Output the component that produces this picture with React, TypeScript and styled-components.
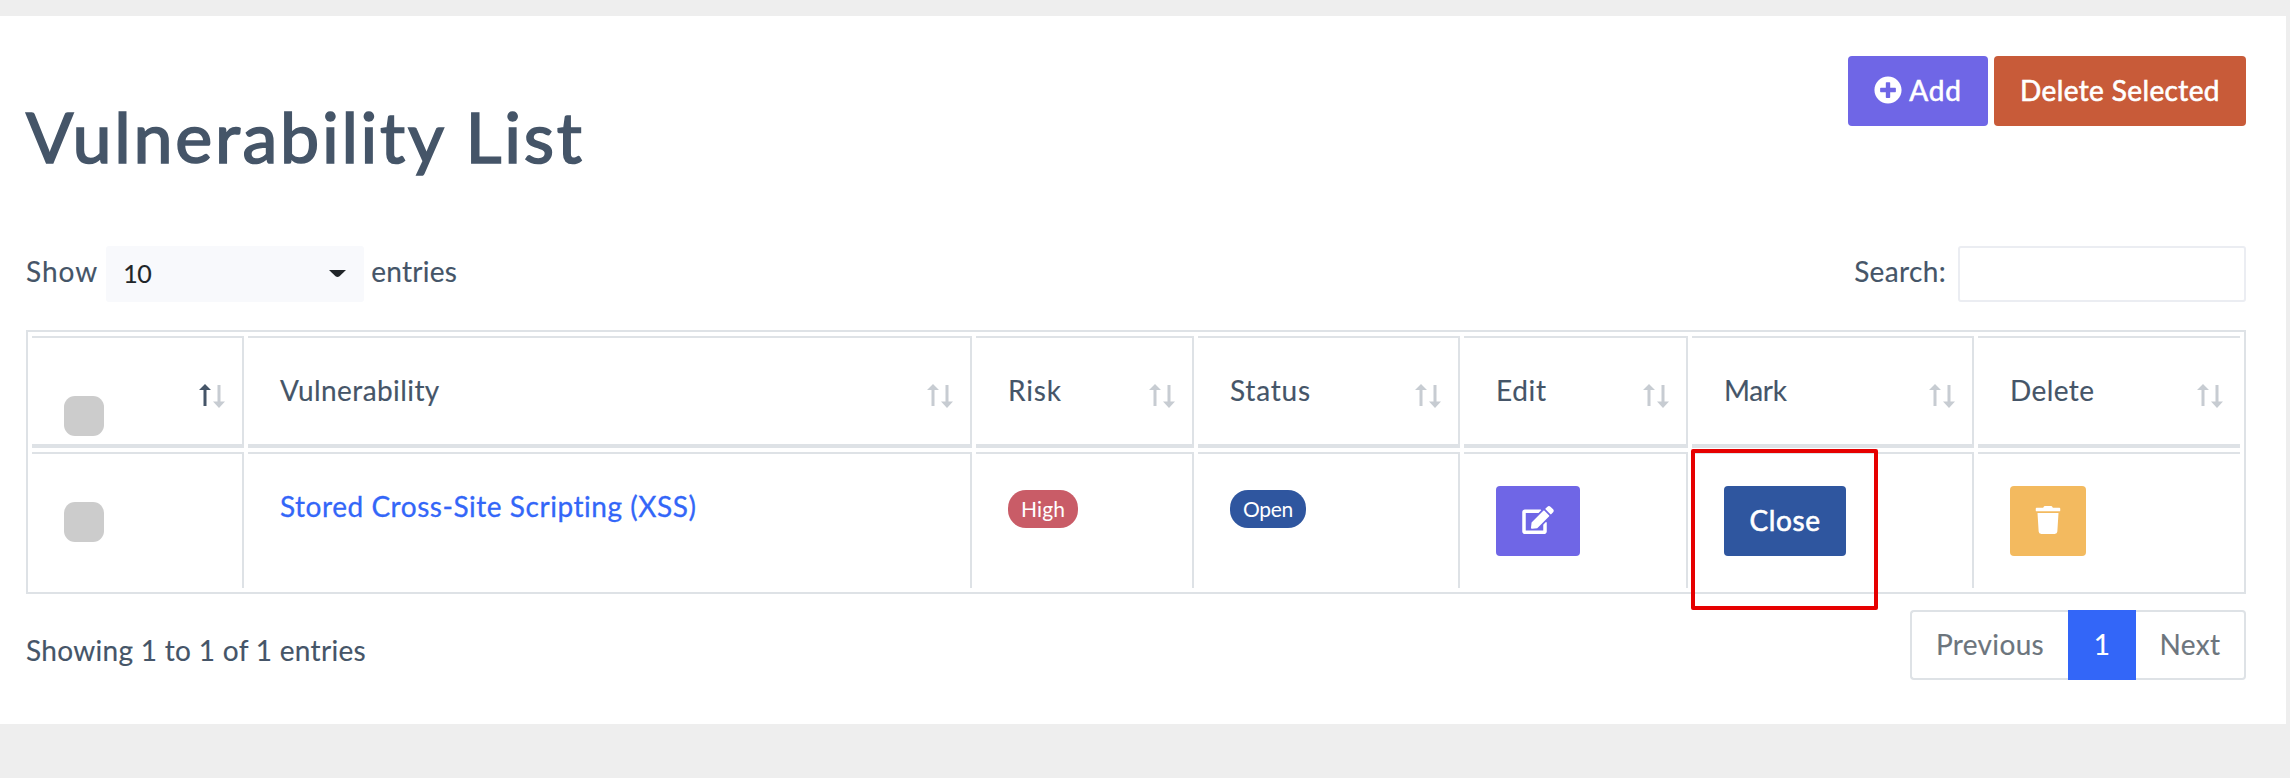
import React from 'react';
import styled, { createGlobalStyle } from 'styled-components';
import { FaEdit, FaPlusCircle, FaTrash } from 'react-icons/fa';

const GlobalStyle = createGlobalStyle`
  *, *::before, *::after { box-sizing: border-box; }
  body {
    margin: 0;
    background: #eeeeee;
    color: #455568;
    font-family: Lato, "Noto Sans", sans-serif;
    font-size: 28px;
    line-height: 40px;
  }
  button { font: inherit; }
`;

const Page = styled.div`
  padding: 16px 4px 54px 0;
  min-height: 778px;
`;

const Card = styled.main`
  height: 708px;
  padding: 40px 40px 0 26px;
  background: #fff;
`;

const Header = styled.header`
  display: flex;
  justify-content: space-between;
  align-items: flex-start;
  height: 190px;
`;

const Title = styled.h1`
  margin: 37px 0 0;
  font-size: 70px;
  line-height: 86px;
  font-weight: 400;
  letter-spacing: 2.7px;
  -webkit-text-stroke: 1.7px currentColor;
`;

const Actions = styled.div`
  display: flex;
  gap: 6px;
`;

const Text = styled.span<{ $ls?: number; $stroke?: number; $dx?: number }>`
  letter-spacing: ${p => p.$ls ?? 0.3}px;
  margin-left: ${p => p.$dx ?? 0}px;
  -webkit-text-stroke: ${p => p.$stroke ?? 0.15}px currentColor;
  white-space: nowrap;
`;

const Button = styled.button<{ $bg: string; $width: number }>`
  display: flex;
  align-items: center;
  justify-content: center;
  width: ${p => p.$width}px;
  height: 70px;
  padding: 0 0 2px;
  border: 0;
  border-radius: 4px;
  background: ${p => p.$bg};
  color: #fff;
  line-height: 36px;
`;

const EditIcon = styled(FaEdit)`
  width: 32px;
  height: 28px;
`;

const Controls = styled.div`
  display: flex;
  justify-content: space-between;
  height: 56px;
  margin-bottom: 28px;
`;

const Label = styled.label`
  display: flex;
  line-height: 51px;
`;

const Select = styled.span`
  display: flex;
  justify-content: space-between;
  align-items: center;
  width: 258px;
  height: 56px;
  margin: 0 7px 0 8px;
  padding: 0 18px 2px 17px;
  border-radius: 3px;
  background: #f8f9fc;
  color: #212529;
  font-size: 25px;
`;

const Caret = styled.svg`
  fill: #212529;
`;

const SearchInput = styled.input`
  width: 288px;
  height: 56px;
  margin-left: 12px;
  padding: 0 14px;
  border: 2px solid #ebedf2;
  border-radius: 3px;
  font: inherit;
  color: inherit;
`;

const Table = styled.table`
  width: 2220px;
  table-layout: fixed;
  border: 2px solid #dee2e6;
  border-collapse: separate;
  border-spacing: 4px;
`;

const Col = styled.col<{ $width: number }>`
  width: ${p => p.$width}px;
`;

const HeadCell = styled.th`
  height: 112px;
  padding: 36px 17px 8px 32px;
  border: solid #dee2e6;
  border-width: 2px 2px 4px 0;
  font-weight: 400;
  line-height: 32px;
  text-align: left;
  vertical-align: top;
  &:last-child { border-right: 0; }
`;

const HeadInner = styled.div`
  display: flex;
  justify-content: space-between;
  align-items: flex-start;
`;

const SortIcon = styled.svg`
  flex: none;
  margin-top: 10px;
`;

const Cell = styled.td`
  position: relative;
  height: 136px;
  padding: 32px 17px 32px 32px;
  border: solid #dee2e6;
  border-width: 2px 2px 0 0;
  vertical-align: top;
  &:last-child { border-right: 0; }
`;

const Checkbox = styled.span<{ $top: number }>`
  display: block;
  width: 40px;
  height: 40px;
  margin-top: ${p => p.$top}px;
  border-radius: 11px;
  background: #ccc;
`;

const VulnLink = styled.a`
  color: #3366f8;
  text-decoration: none;
`;

const Badge = styled.span<{ $bg: string; $width: number }>`
  display: flex;
  justify-content: center;
  width: ${p => p.$width}px;
  height: 38px;
  margin-top: 4px;
  border-radius: 18px;
  background: ${p => p.$bg};
  color: #fff;
  font-size: 21px;
  line-height: 37px;
`;

const Highlight = styled.span`
  position: absolute;
  left: -1px;
  top: -5px;
  width: 187px;
  height: 161px;
  border: 4px solid #e60000;
  border-radius: 2px;
  pointer-events: none;
`;

const Footer = styled.footer`
  display: flex;
  justify-content: space-between;
  align-items: flex-start;
`;

const Info = styled.div`
  padding-top: 36px;
`;

const Pagination = styled.nav`
  display: flex;
  width: 336px;
  height: 70px;
  margin-top: 16px;
`;

const PageItem = styled.a<{ $width: number; $active?: boolean; $side?: 'left' | 'right' }>`
  display: flex;
  align-items: center;
  justify-content: center;
  width: ${p => p.$width}px;
  padding-bottom: 3px;
  border: 2px solid ${p => (p.$active ? '#3366f8' : '#dee2e6')};
  ${p => p.$side === 'left' && 'border-right: 0; border-radius: 4px 0 0 4px;'}
  ${p => p.$side === 'right' && 'border-left: 0; border-radius: 0 4px 4px 0;'}
  background: ${p => (p.$active ? '#3366f8' : '#fff')};
  color: ${p => (p.$active ? '#fff' : '#6c757d')};
`;

const columns: { label: string; width: number; ls: number }[] = [
  { label: '', width: 212, ls: 0 },
  { label: 'Vulnerability', width: 724, ls: 0.42 },
  { label: 'Risk', width: 218, ls: 0.87 },
  { label: 'Status', width: 262, ls: 0.8 },
  { label: 'Edit', width: 224, ls: 0.67 },
  { label: 'Mark', width: 282, ls: -0.33 },
  { label: 'Delete', width: 262, ls: 0.4 },
];

function SortArrows({ active }: { active?: boolean }) {
  return (
    <SortIcon width="26" height="24" viewBox="0 0 26 24">
      <path d="M6 0 12 6H7.5V22H4.5V6H0Z" fill={active ? '#455568' : '#c7ccd2'} />
      <path d="M18.5 1H21.5V17.5H26L20 24 14 17.5H18.5Z" fill="#c7ccd2" />
    </SortIcon>
  );
}

export default function App() {
  return (
    <Page>
      <GlobalStyle />
      <Card>
        <Header>
          <Title>Vulnerability List</Title>
          <Actions>
            <Button $bg="#6f66e6" $width={140}>
              <FaPlusCircle size={28} />
              <Text $ls={0.8} $stroke={0.6} $dx={7}>Add</Text>
            </Button>
            <Button $bg="#c85b39" $width={252}>
              <Text $ls={0.38} $stroke={0.6}>Delete Selected</Text>
            </Button>
          </Actions>
        </Header>

        <Controls>
          <Label>
            <Text $ls={1}>Show</Text>
            <Select>
              <Text $ls={-0.4}>10</Text>
              <Caret width="17" height="7" viewBox="0 0 17 7"><path d="M0 0H17L10.5 6.2Q8.5 7.6 6.5 6.2Z" /></Caret>
            </Select>
            <Text $ls={0.26}>entries</Text>
          </Label>
          <Label>
            <Text $ls={0.35}>Search:</Text>
            <SearchInput type="text" />
          </Label>
        </Controls>

        <Table>
          <colgroup>
            {columns.map((c, i) => <Col key={i} $width={c.width} />)}
          </colgroup>
          <thead>
            <tr>
              {columns.map((c, i) => (
                <HeadCell key={i}>
                  <HeadInner>
                    {c.label ? <Text $ls={c.ls}>{c.label}</Text> : <Checkbox $top={22} />}
                    <SortArrows active={i === 0} />
                  </HeadInner>
                </HeadCell>
              ))}
            </tr>
          </thead>
          <tbody>
            <tr>
              <Cell><Checkbox $top={16} /></Cell>
              <Cell><VulnLink><Text $ls={0.54} $stroke={0.3}>Stored Cross-Site Scripting (XSS)</Text></VulnLink></Cell>
              <Cell><Badge $bg="#c95c67" $width={70}><Text $ls={0.15} $stroke={0}>High</Text></Badge></Cell>
              <Cell><Badge $bg="#2f569f" $width={76}><Text $ls={-0.29} $stroke={0}>Open</Text></Badge></Cell>
              <Cell><Button $bg="#6f66e6" $width={84}><EditIcon /></Button></Cell>
              <Cell>
                <Button $bg="#2f569f" $width={122}><Text $ls={0.6} $stroke={0.6}>Close</Text></Button>
                <Highlight />
              </Cell>
              <Cell><Button $bg="#f3ba5f" $width={76}><FaTrash size={28} /></Button></Cell>
            </tr>
          </tbody>
        </Table>

        <Footer>
          <Info><Text $ls={0.31}>Showing 1 to 1 of 1 entries</Text></Info>
          <Pagination>
            <PageItem $width={158} $side="left"><Text $ls={0.35}>Previous</Text></PageItem>
            <PageItem $width={68} $active><Text>1</Text></PageItem>
            <PageItem $width={110} $side="right"><Text $ls={0.34}>Next</Text></PageItem>
          </Pagination>
        </Footer>
      </Card>
    </Page>
  );
}
